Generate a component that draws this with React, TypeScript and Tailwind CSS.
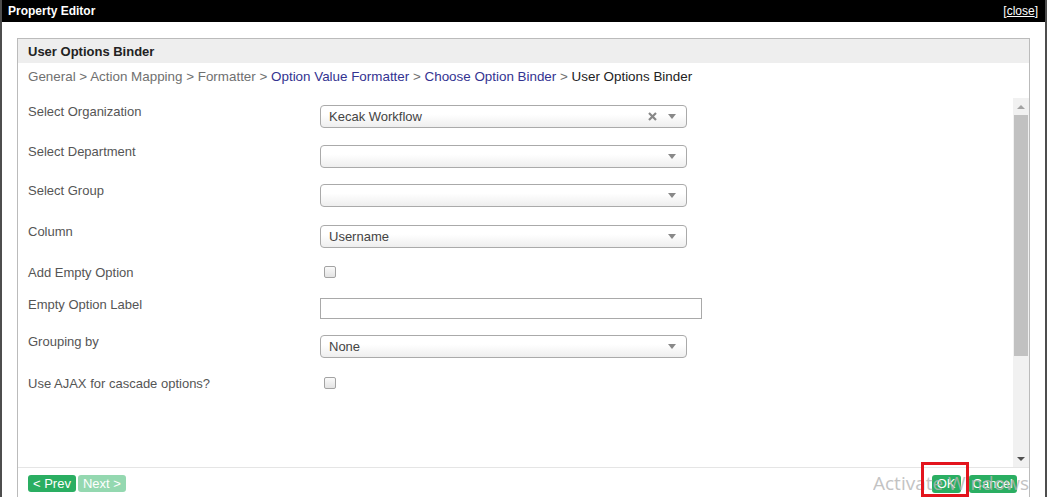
import React from "react"

const font = { fontFamily: '"Liberation Sans", Arial, sans-serif' }

function Arrow() {
  return (
    <svg width="8" height="5" viewBox="0 0 8 5" className="shrink-0">
      <path d="M0 0 L8 0 L4 5 Z" fill="#888" />
    </svg>
  )
}

function Select({ value, clear }: { value?: string; clear?: boolean }) {
  return (
    <div className="mt-[2px] flex h-[23px] w-[367px] items-center rounded-[4px] border border-[#aaa] bg-gradient-to-b from-white from-40% to-[#eee] pl-[8px] pr-[10px] text-[13px] text-[#444]">
      <span className="flex-1 truncate pt-[1px]">{value}</span>
      {clear && (
        <svg width="9" height="9" viewBox="0 0 9 9" className="mr-[11px] shrink-0">
          <path d="M1 1 L8 8 M8 1 L1 8" stroke="#888" strokeWidth="2.2" />
        </svg>
      )}
      <Arrow />
    </div>
  )
}

function Checkbox() {
  return (
    <div className="ml-[4px] mt-[2px] h-[12px] w-[12px] rounded-[2px] border border-[#a3a3a3] bg-gradient-to-b from-[#fafafa] to-[#e3e3e3]" />
  )
}

function Row({ label, h, children }: { label: string; h: string; children: React.ReactNode }) {
  return (
    <div className={`flex items-start ${h}`}>
      <div className="w-[292px] shrink-0 pt-[1px] text-[13px] leading-[16px] text-[#555]">{label}</div>
      {children}
    </div>
  )
}

export default function App() {
  return (
    <div style={font} className="relative flex h-[497px] w-[1047px] overflow-hidden bg-[#4d4d4d] px-[2px]">
      <div className="flex flex-1 flex-col bg-white">
        <div className="flex h-[22px] shrink-0 items-center justify-between bg-black pl-[6px] pr-[7px] text-[12px] text-white">
          <span className="font-bold">Property Editor</span>
          <span>
            [<span className="underline">close</span>]
          </span>
        </div>

        <div className="mx-[15px] mt-[16px] flex flex-1 flex-col border-x border-t border-[#bbb]">
          <div className="flex h-[24px] shrink-0 items-center bg-[#eee] pl-[10px] pt-[1px] text-[13px] font-bold text-[#222]">
            User Options Binder
          </div>
          <div className="h-[35px] shrink-0 pl-[10px] pt-[6px] text-[13.4px] leading-[16px] text-[#707070]">
            General &gt; Action Mapping &gt; Formatter &gt;{" "}
            <span className="text-[#333391]">Option Value Formatter</span> &gt;{" "}
            <span className="text-[#333391]">Choose Option Binder</span> &gt;{" "}
            <span className="text-[#222]">User Options Binder</span>
          </div>

          <div className="flex h-[369px] shrink-0">
            <div className="flex-1 pl-[10px] pt-[5px]">
              <Row label="Select Organization" h="h-[40px]">
                <Select value="Kecak Workflow" clear />
              </Row>
              <Row label="Select Department" h="h-[39px]">
                <Select />
              </Row>
              <Row label="Select Group" h="h-[41px]">
                <Select />
              </Row>
              <Row label="Column" h="h-[41px]">
                <Select value="Username" />
              </Row>
              <Row label="Add Empty Option" h="h-[32px]">
                <Checkbox />
              </Row>
              <Row label="Empty Option Label" h="h-[37px]">
                <div className="mt-[2px] h-[21px] w-[382px] border border-[#a9a9a9] bg-white" />
              </Row>
              <Row label="Grouping by" h="h-[42px]">
                <Select value="None" />
              </Row>
              <Row label="Use AJAX for cascade options?" h="h-[30px]">
                <Checkbox />
              </Row>
            </div>
            <div className="flex w-[16px] shrink-0 flex-col bg-[#f1f1f1]">
              <div className="flex h-[17px] items-center justify-center">
                <svg width="8" height="4" viewBox="0 0 8 4">
                  <path d="M0 4 L8 4 L4 0 Z" fill="#a3a3a3" />
                </svg>
              </div>
              <div className="mx-[1px] h-[241px] bg-[#c1c1c1]" />
              <div className="flex-1" />
              <div className="flex h-[17px] items-center justify-center">
                <svg width="8" height="4" viewBox="0 0 8 4">
                  <path d="M0 0 L8 0 L4 4 Z" fill="#505050" />
                </svg>
              </div>
            </div>
          </div>

          <div className="flex flex-1 items-start justify-between border-t border-[#e5e5e5] pl-[10px] pr-[12px] pt-[7px]">
            <div className="flex gap-[2px]">
              <button className="h-[17px] rounded-[3px] bg-[#2aae62] px-[5px] text-[13px] leading-[17px] text-white">&lt; Prev</button>
              <button className="h-[17px] rounded-[3px] bg-[#94d8b0] px-[5px] text-[13px] leading-[17px] text-white">Next &gt;</button>
            </div>
            <div className="flex gap-[8px]">
              <button className="h-[18px] rounded-[3px] bg-[#2aae62] px-[5px] text-[13px] leading-[18px] text-white">OK</button>
              <button className="h-[18px] rounded-[3px] bg-[#2aae62] px-[4px] text-[13px] leading-[18px] text-white">Cancel</button>
            </div>
          </div>
        </div>
      </div>

      <div
        className="pointer-events-none absolute left-[873px] top-[470px] text-[19px] leading-[26px] text-[#b5b5b5] opacity-80"
        style={{ fontFamily: '"Open Sans", "Noto Sans", sans-serif' }}
      >
        Activate Windows
      </div>
      <div className="pointer-events-none absolute left-[921px] top-[462px] h-[35px] w-[48px] border-[3px] border-[#e3141d]" />
    </div>
  )
}
